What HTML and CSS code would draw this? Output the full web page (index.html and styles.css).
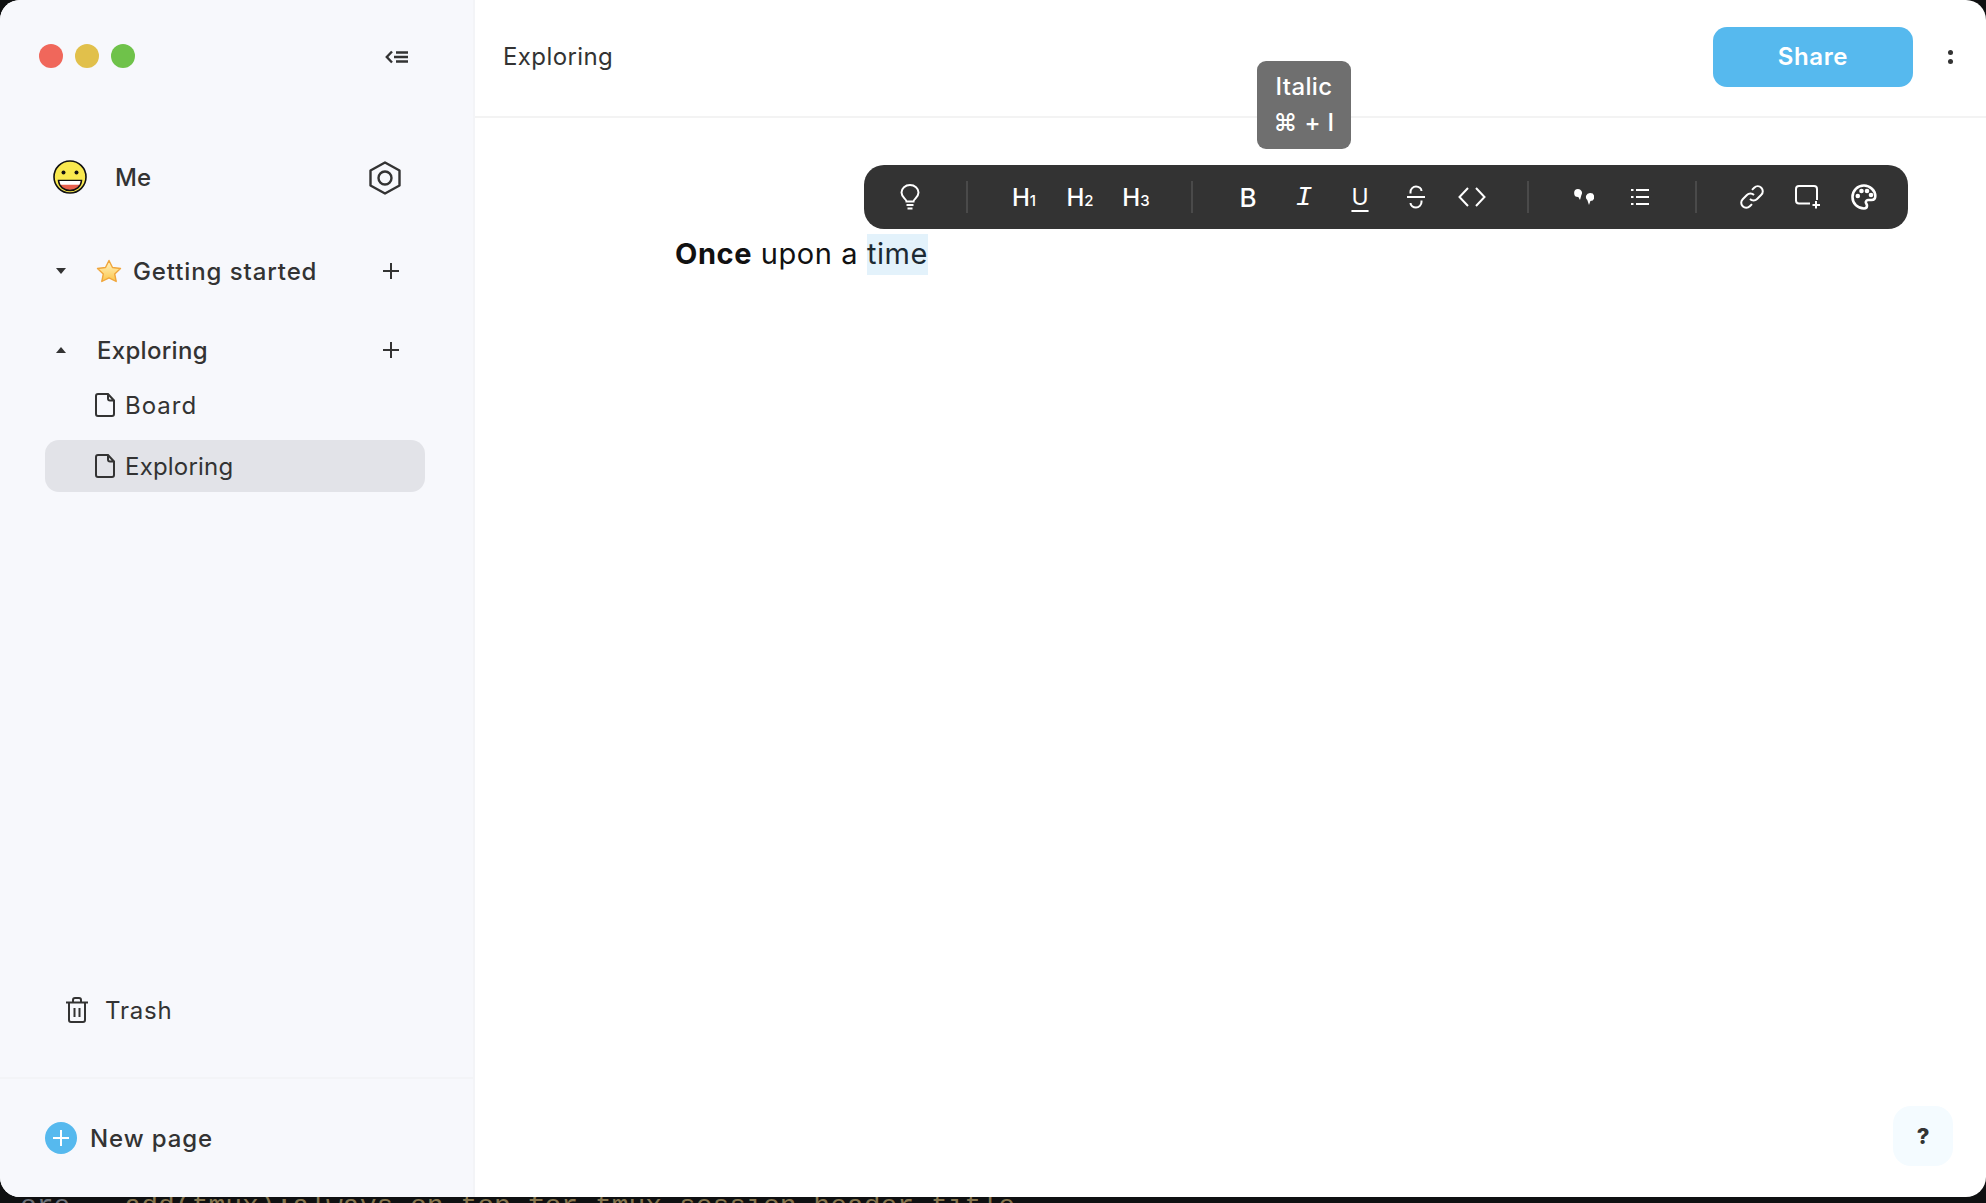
FILE: index.html
```html
<!DOCTYPE html>
<html lang="en">
<head>
    <meta charset="UTF-8">
    <meta name="viewport" content="width=device-width, initial-scale=1.0">
    <title>Exploring</title>
    <link rel="stylesheet" href="styles.css">
</head>
<body>
    <div class="window">
        <aside class="sidebar">
            <div class="top-row">
                <div class="traffic">
                    <span class="light red"></span>
                    <span class="light yellow"></span>
                    <span class="light green"></span>
                </div>
                <svg class="collapse" width="23" height="14" viewBox="0 0 23 14"><path d="M7 1.500 1.800 7 7 12.500M11 2.500h12M9 7h14M11 11.500h12"/></svg>
            </div>
            <div class="user-row">
                <svg class="smiley" width="34" height="34" viewBox="0 0 34 34">
                    <circle cx="17" cy="17" r="16" fill="#f9e94f" stroke="#111" stroke-width="1.6"/>
                    <circle cx="10.500" cy="12.500" r="2" fill="#111"/>
                    <circle cx="23.500" cy="12.500" r="2" fill="#111"/>
                    <path d="M5.500 20.500h23c-.5 6.500-5.500 10-11.500 10s-11-3.500-11.500-10z" fill="#e8604c" stroke="#111" stroke-width="1.500"/>
                    <path d="M6.500 21h21c-.2 1.500-.6 2.800-1.200 3.800H7.700c-.6-1-1-2.300-1.200-3.800z" fill="#fff"/>
                </svg>
                <span class="user-name">Me</span>
                <svg class="hex" width="32" height="34" viewBox="0 0 32 34"><path d="M16 1.500 30.500 9.500v15L16 32.500 1.500 24.500v-15z"/><circle cx="16" cy="17" r="6.500"/></svg>
            </div>
            <div class="section-row first">
                <span class="caret down"></span>
                <svg class="star" width="26" height="24" viewBox="0 0 26 24">
                    <defs><linearGradient id="star-fill" x1="0" y1="0" x2="0" y2="1"><stop offset="0" stop-color="#fff6c8"/><stop offset="1" stop-color="#fcc54a"/></linearGradient></defs>
                    <path d="M13 1.500 16.500 8.500 24.500 9.500 18.700 15 20.200 22.500 13 18.800 5.800 22.500 7.300 15 1.500 9.500 9.500 8.500z" fill="url(#star-fill)" stroke="#f0a63c" stroke-width="1.400" stroke-linejoin="round"/>
                </svg>
                <span class="section-name">Getting started</span>
                <svg class="plus" width="16" height="16" viewBox="0 0 16 16"><path d="M8 0v16M0 8h16"/></svg>
            </div>
            <div class="section-row second">
                <span class="caret up"></span>
                <span class="section-name">Exploring</span>
                <svg class="plus" width="16" height="16" viewBox="0 0 16 16"><path d="M8 0v16M0 8h16"/></svg>
            </div>
            <div class="page-row board">
                <svg class="doc" width="20" height="24" viewBox="0 0 20 24"><path d="M3 1h10l6 6.500V21a2 2 0 0 1-2 2H3a2 2 0 0 1-2-2V3a2 2 0 0 1 2-2zM13 1v4.500a2 2 0 0 0 2 2h4"/></svg>
                <span>Board</span>
            </div>
            <div class="page-row selected">
                <svg class="doc" width="20" height="24" viewBox="0 0 20 24"><path d="M3 1h10l6 6.500V21a2 2 0 0 1-2 2H3a2 2 0 0 1-2-2V3a2 2 0 0 1 2-2zM13 1v4.500a2 2 0 0 0 2 2h4"/></svg>
                <span>Exploring</span>
            </div>
            <div class="trash-row">
                <svg class="trash" width="22" height="26" viewBox="0 0 22 26"><path d="M0 5.500h22M7 5.500V3a2 2 0 0 1 2-2h4a2 2 0 0 1 2 2v2.500M3 5.500V23a2 2 0 0 0 2 2h12a2 2 0 0 0 2-2V5.500M8.500 11v9M13.500 11v9"/></svg>
                <span>Trash</span>
            </div>
            <div class="sidebar-footer">
                <span class="new-icon"><svg width="18" height="18" viewBox="0 0 18 18"><path d="M9 1v16M1 9h16"/></svg></span>
                <span>New page</span>
            </div>
        </aside>

        <main class="main">
            <header class="header">
                <span class="doc-title">Exploring</span>
                <div class="header-actions">
                    <button class="share-btn">Share</button>
                    <span class="more"><i></i><i></i></span>
                </div>
            </header>
            <div class="editor">
                <p class="line"><strong>Once</strong> upon a <span class="picked">time</span></p>
            </div>

            <div class="tooltip">
                <div>Italic</div>
                <div>⌘ + I</div>
            </div>

            <div class="toolbar">
                <span class="tool"><svg width="20" height="26" viewBox="0 0 20 26"><path d="M6.500 17.500c0-2.500-5-4-5-9a8.500 7.500 0 0 1 17 0c0 5-5 6.500-5 9zM6.500 21h7M7.500 24.500h5"/></svg></span>
                <span class="sep first"></span>
                <span class="tool head">H<small>1</small></span>
                <span class="tool head">H<small>2</small></span>
                <span class="tool head">H<small>3</small></span>
                <span class="sep"></span>
                <span class="tool bold">B</span>
                <span class="tool slant">I</span>
                <span class="tool under"><u>U</u></span>
                <span class="tool"><svg width="18" height="24" viewBox="0 0 18 24"><path d="M0 12h18M3.500 8.500V7c0-3 2.500-5.500 5.500-5.500s5.500 2 5.500 4.500M14.500 15.500V17c0 3-2.500 5.500-5.500 5.500S3.500 20.500 3.500 18"/></svg></span>
                <span class="tool"><svg width="28" height="20" viewBox="0 0 28 20"><path d="M10 1 1.500 10 10 19M18 1l8.500 9-8.500 9"/></svg></span>
                <span class="sep"></span>
                <span class="tool"><svg width="20" height="16" viewBox="0 0 20 16"><path class="solid" d="M4 0a4 4 0 0 1 3.400 6.100L6 11 4.300 8A4 4 0 0 1 4 0zM16 4a4 4 0 0 1 .4 8L15 16l-1.700-5A4 4 0 0 1 16 4z"/></svg></span>
                <span class="tool"><svg width="18" height="18" viewBox="0 0 18 18"><path d="M5 2h13M5 9h13M5 16h13M0 2h2.500M0 9h2.500M0 16h2.500"/></svg></span>
                <span class="sep"></span>
                <span class="tool"><svg width="24" height="24" viewBox="0 0 24 24"><path d="M10 14a5 5 0 0 0 7.100 0l4.200-4.200a5 5 0 0 0-7.100-7.100L12 4.900M14 10a5 5 0 0 0-7.100 0l-4.200 4.200a5 5 0 0 0 7.100 7.100l2.200-2.200"/></svg></span>
                <span class="tool"><svg width="26" height="24" viewBox="0 0 26 24"><path d="M15 18.500H4a3 3 0 0 1-3-3V4a3 3 0 0 1 3-3h15a3 3 0 0 1 3 3v11M21 16v7.500M17.500 20h7.500"/></svg></span>
                <span class="tool"><svg class="palette" width="26" height="26" viewBox="0 0 26 26"><path d="M13 1.500C6.500 1.500 1.500 6.500 1.500 13S6.500 24.500 13 24.500c2.200 0 3-1.300 3-2.700 0-1.800-1.200-2.100-1.200-3.500 0-1.400 1.100-2.300 2.500-2.300h3.200c2.500 0 3.800-1.500 3.800-4 0-5.500-5.300-10.500-11.300-10.500z"/><circle class="solid" cx="6.800" cy="12" r="2.300"/><circle class="solid" cx="10.500" cy="7" r="2.300"/><circle class="solid" cx="16" cy="7" r="2.300"/><circle class="solid" cx="20" cy="11" r="2.300"/></svg></span>
            </div>

            <button class="help-btn">?</button>
        </main>
    </div>
    <div class="terminal"><span class="gray">ore</span><span class="brown">add(tmux):always-on-top for tmux-session-header-title</span></div>
</body>
</html>
```

FILE: styles.css
```css
*{
    box-sizing: border-box;
}
html, body{
    height: 100%;
}
body{
    margin: 0;
    padding: 0;
    height: 1203px;
    overflow: hidden;
    background-color: #0f1011;
    font-family: Inter, "DejaVu Sans", sans-serif;
    color: #333333;
}
svg{
    display: block;
    fill: none;
    stroke: currentColor;
}

.window{
    display: flex;
    height: 1197px;
    border-radius: 20px;
    overflow: hidden;
    background-color: #ffffff;
}

/* left column */
.sidebar{
    display: flex;
    flex-direction: column;
    width: 475px;
    flex-shrink: 0;
    background-color: #f7f8fc;
    border-right: 2px solid #f3f4f7;
    font-size: 24px;
}
.top-row{
    display: flex;
    align-items: center;
    justify-content: space-between;
    height: 24px;
    margin-top: 44px;
    padding: 0 65px 0 39px;
}
.traffic{
    display: flex;
    gap: 12px;
}
.light{
    width: 24px;
    height: 24px;
    border-radius: 50%;
}
.red{
    background-color: #f0675b;
}
.yellow{
    background-color: #e1c04b;
}
.green{
    background-color: #6fc24a;
}
.collapse{
    stroke-width: 2.4;
    margin-top: 2px;
}
.user-row{
    display: flex;
    align-items: center;
    height: 34px;
    margin-top: 92px;
    padding: 0 72px 0 53px;
}
.smiley{
    stroke: none;
    margin-right: 28px;
}
.user-name{
    font-weight: 500;
    flex: 1;
}
.hex{
    stroke-width: 2.4;
    stroke-linejoin: round;
    margin-top: 1px;
}
.section-row{
    display: flex;
    align-items: center;
    height: 40px;
    padding: 0 74px 0 56px;
}
.section-row.first{
    margin-top: 57px;
}
.section-row.second{
    margin-top: 39px;
}
.section-name{
    flex: 1;
    font-weight: 500;
    letter-spacing: 0.3px;
}
.first .section-name{
    letter-spacing: 0.9px;
}
.caret{
    width: 0;
    height: 0;
    border-left: 5px solid transparent;
    border-right: 5px solid transparent;
    margin-right: 31px;
}
.caret.down{
    border-top: 6px solid #333333;
    margin-right: 30px;
}
.caret.up{
    border-bottom: 6px solid #333333;
}
.star{
    stroke: none;
    margin-right: 11px;
}
.plus{
    stroke-width: 2;
}
.page-row{
    display: flex;
    align-items: center;
    gap: 10px;
    height: 52px;
    margin: 0 48px 0 45px;
    padding-left: 50px;
    border-radius: 14px;
    letter-spacing: 0.2px;
}
.page-row.board{
    margin-top: 9px;
    letter-spacing: 1px;
}
.page-row.selected{
    margin-top: 9px;
    background-color: #e2e3e8;
}
.doc{
    stroke-width: 2;
}
.trash-row{
    display: flex;
    align-items: center;
    gap: 17px;
    height: 40px;
    margin-top: auto;
    margin-bottom: 47px;
    padding-left: 66px;
    letter-spacing: 0.8px;
}
.trash{
    stroke-width: 2;
}
.sidebar-footer{
    display: flex;
    align-items: center;
    gap: 13px;
    height: 120px;
    padding-left: 45px;
    border-top: 2px solid #f3f4f7;
    font-weight: 500;
    letter-spacing: 0.9px;
}
.new-icon{
    display: flex;
    align-items: center;
    justify-content: center;
    width: 32px;
    height: 32px;
    border-radius: 50%;
    background-color: #56b9ee;
    color: #ffffff;
    stroke-width: 2;
}

/* right side */
.main{
    position: relative;
    flex: 1;
}
.header{
    display: flex;
    align-items: center;
    justify-content: space-between;
    height: 118px;
    padding: 0 33px 3px 28px;
    border-bottom: 2px solid #f3f3f3;
    font-size: 24px;
}
.doc-title{
    letter-spacing: 0.4px;
}
.header-actions{
    display: flex;
    align-items: center;
    gap: 35px;
}
.share-btn{
    width: 200px;
    height: 60px;
    border: none;
    border-radius: 14px;
    background-color: #56b9ee;
    color: #ffffff;
    font-family: inherit;
    font-size: 24px;
    font-weight: 600;
    letter-spacing: 0.6px;
}
.more{
    display: flex;
    flex-direction: column;
    gap: 4px;
}
.more i{
    display: block;
    width: 5px;
    height: 5px;
    border-radius: 50%;
    background-color: #333333;
}
.editor{
    padding: 114px 0 0 200px;
}
.line{
    margin: 0;
    font-size: 29px;
    line-height: 44px;
    letter-spacing: 0.58px;
    color: #111111;
}
.line strong{
    font-weight: 700;
}
.picked{
    background-color: #e3f2fb;
    padding: 2px 0 4px;
    color: #1c2a33;
}

.tooltip{
    position: absolute;
    left: 782px;
    top: 61px;
    width: 94px;
    height: 88px;
    padding: 8px 0;
    border-radius: 9px;
    background-color: #6f6f6f;
    color: #ffffff;
    font-size: 24px;
    font-weight: 500;
    line-height: 36px;
    letter-spacing: 0.4px;
    text-align: center;
}
.toolbar{
    position: absolute;
    left: 389px;
    top: 165px;
    display: flex;
    align-items: center;
    width: 1044px;
    height: 64px;
    padding: 0 16px 0 18px;
    border-radius: 20px;
    background-color: #333333;
    color: #ffffff;
}
.tool{
    display: flex;
    align-items: center;
    justify-content: center;
    flex-shrink: 0;
    width: 56px;
    height: 40px;
    font-size: 24px;
}
.tool svg{
    stroke-width: 2;
}
.tool svg.palette{
    stroke-width: 2.6;
}
.tool .solid{
    fill: currentColor;
    stroke: none;
}
.head{
    font-weight: 500;
}
.head small{
    font-size: 15px;
    margin-top: 6px;
}
.bold{
    font-weight: 500;
    font-size: 26px;
}
.slant{
    font-family: "Liberation Mono", monospace;
    font-style: italic;
    font-size: 28px;
}
.under u{
    text-underline-offset: 5px;
    text-decoration-thickness: 2px;
    font-size: 23px;
}
.sep{
    flex-shrink: 0;
    width: 2px;
    height: 32px;
    margin: 0 27px;
    background-color: #4a4a4a;
}
.sep.first{
    margin: 0 28px;
}
.help-btn{
    position: absolute;
    right: 33px;
    top: 1106px;
    width: 60px;
    height: 60px;
    border: none;
    border-radius: 18px;
    background-color: #f4fbff;
    color: #333333;
    font-family: inherit;
    font-size: 22px;
    font-weight: 800;
}

/* terminal peeking out under the window */
.terminal{
    height: 6px;
    padding-left: 20px;
    overflow: hidden;
    font-family: "Liberation Mono", monospace;
    font-size: 28px;
    line-height: 20px;
    white-space: pre;
}
.gray{
    color: #6d7178;
    margin-right: 54px;
}
.brown{
    color: #86754e;
}
```
